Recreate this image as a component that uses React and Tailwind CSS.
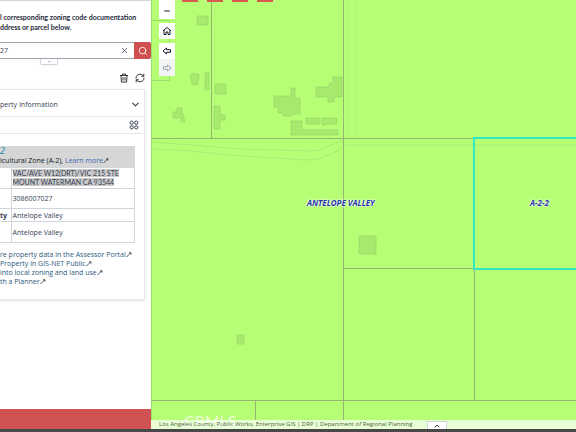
import React from "react";
import { ChevronDown, ChevronUp, Search, X, Minus } from "lucide-react";

const rows = [
	{ label: "", value: "VAC/AVE W12(DRT)/VIC 215 STE MOUNT WATERMAN CA 93544", height: "h-[21px]", marked: true },
	{ label: "", value: "3086007027", height: "h-5" },
	{ label: "ty", value: "Antelope Valley", height: "h-[13px]" },
	{ label: "", value: "Antelope Valley", height: "h-[21px]" },
];

const links = [
	"re property data in the Assessor Portal",
	"Property in GIS-NET Public",
	"into local zoning and land use",
	"th a Planner",
];

// footprints drawn on the map, in map pixels
const buildings = [
	"M46 16h11v9h-11z",
	"M40 74l3 -1 1 1 4 0 0 5 -2 6 -5 -1 -1 -5z",
	"M54 73h4v17h-4z",
	"M64 84h11v10h-11z",
	"M63 106h6v9h5v5h-5v9h-6z",
	"M22 112h4v-4h5v6h1l2 8h-4v-4h-8z",
	"M123 96h17v-8h4v10h5v16h-8v2h-9v-3h-5v-6h-4z",
	"M165 87h13v-4h4v-6h9v20h-8v5h-6v-5h-12z",
	"M140 121h11v9h36v5h-47z",
	"M155 118h14v6h-14z",
	"M171 118h15v6h-11v1h-4z",
	"M208 236h17v18h-17z",
	"M86 335h7v9h-7z",
];

const ExternalMark = () => (
	<svg viewBox="0 0 6 6" className="inline w-[6px] h-[6px] text-gray-700" fill="none" stroke="currentColor" strokeWidth="0.9">
		<path d="M0.5 5L4.500 1M3 0.800h2v1.800" />
	</svg>
);

const MapCanvas = () => (
	<svg className="block w-full h-full" fill="none" aria-hidden="true">
		<rect width="100%" height="100%" fill="#b6ff74" />
		<path d="M0 20.500H18.500V80.500H0M0.500 0V420" stroke="#9adf69" />
		<path d="M0 142L40 145 90 149 160 151 170 150 187 142 193 139 M0 149L40 151 90 156 155 160 168 159 186 151 195 145 H2000" stroke="#a9ec76" />
		<path d="M197.500 0V138M204.500 0V138" stroke="#aef478" />
		<g fill="#a6e96d" stroke="#98d66a" strokeWidth="0.7">
			{buildings.map((d) => <path key={d} d={d} />)}
		</g>
		<path
			d="M60.500 0V138.500M192.500 0V420M0 138.500H323M193 268.500H323M323.500 269V400M0 400.500H2000M104.500 401V420"
			stroke="#96b573"
		/>
		<path d="M2000 138H323V269H2000" stroke="#35e8c4" strokeWidth="2" />
	</svg>
);

const mapButton = "flex items-center justify-center w-4";
const mapLabel = "absolute top-[198px] font-['Noto_Sans',sans-serif] text-[8px] font-bold italic text-[#2438a0] [text-shadow:0_0_2px_white,0_0_2px_white,0_0_1px_white]";

const App = () => {
	return (
		<div className="flex flex-col h-screen overflow-hidden bg-[#484848] font-['Open_Sans',sans-serif] text-[7px] leading-[9px] text-gray-700">
			<div className="flex flex-1 min-h-0">
				{/* Search panel */}
				<aside className="flex flex-col w-[151px] shrink-0 overflow-hidden bg-white border-t border-gray-300">
					<p className="h-[41px] pt-[11px] font-['Lato',sans-serif] font-bold leading-[10px] whitespace-nowrap text-gray-800">
						l corresponding zoning code documentation
						<br />
						ddress or parcel below.
					</p>
					<form className="flex h-[17px] shrink-0" onSubmit={(e) => e.preventDefault()}>
						<div className="flex flex-1 min-w-0 items-center border-y border-gray-400">
							<input aria-label="Address or parcel" defaultValue="27" className="flex-1 min-w-0 outline-none" />
							<button type="button" aria-label="Clear" className="w-[20px] flex justify-center"><X size={9} strokeWidth={2} /></button>
						</div>
						<button aria-label="Search" className="flex items-center justify-center w-[17px] bg-[#d05050] text-white rounded-r-xs"><Search size={10} strokeWidth={2} /></button>
					</form>
					<button aria-label="Collapse" className="flex items-center justify-center w-[18px] h-[6px] ml-10 shrink-0 border border-t-0 border-gray-300 rounded-b-xs shadow-xs"><ChevronUp size={5} /></button>
					<div className="flex justify-end gap-[6px] h-6 pr-[6px] pt-[8px] shrink-0">
						<button aria-label="Delete" className="h-[10px]">
							<svg viewBox="0 0 10 10" className="w-[10px] h-[10px]" fill="none" stroke="#222" strokeWidth="0.9">
								<path d="M1 2.500h8M3.500 2.300V1h3v1.300M2 2.500l.4 6.600h5.200L8 2.500M4 4.200v3.300M6 4.200v3.300" />
							</svg>
						</button>
						<button aria-label="Refresh" className="h-[10px]">
							<svg viewBox="0 0 10 10" className="w-[10px] h-[10px]" fill="none" stroke="#222" strokeWidth="0.9">
								<path d="M1 5.500C.8 3 2.500 1.200 5 1.200c1.500 0 2.700.8 3.500 2M8.800.8v2.500H6.400M9 4.600c.2 2.400-1.500 4.200-4 4.200-1.500 0-2.700-.8-3.500-2M1.200 9.300V6.700h2.400" />
							</svg>
						</button>
					</div>
					<section className="h-[211px] shrink-0 mr-[6px] border-t border-r border-b border-gray-200 rounded-br-xs shadow-sm">
						<button className="flex w-full items-center justify-between h-[27px] pt-[2px] pr-[3px] border-b border-gray-200">
							<span>perty Information</span>
							<ChevronDown size={11} strokeWidth={2.5} />
						</button>
						<div className="flex justify-end items-center h-[17px] pr-[5px] border-b border-gray-200">
							<button aria-label="Layers">
								<svg viewBox="0 0 10 10" className="w-[10px] h-[10px]" fill="none" stroke="currentColor" strokeWidth="1">
									<circle cx="2.700" cy="2.700" r="1.600" /><circle cx="7.300" cy="2.700" r="1.600" />
									<circle cx="2.700" cy="7.300" r="1.600" /><circle cx="7.300" cy="7.300" r="1.600" />
								</svg>
							</button>
						</div>
						<div className="mt-3 mr-[9px] h-[21px] bg-[#d6d6d6] whitespace-nowrap text-gray-900">
							<div className="italic text-[9px] leading-[10px] text-[#168ba8]">2</div>
							<div>icultural Zone (A-2), <a href="#zone" className="text-[#3b66b0]">Learn more<ExternalMark /></a></div>
						</div>
						<div className="mr-[9px]">
							<table className="w-full border-collapse">
								<tbody>
									{rows.map((row, index) => (
										<tr key={index} className={row.height}>
											<th className="w-[11px] p-0 text-left border border-l-0 border-gray-300">{row.label}</th>
											<td className="p-0 pl-px border border-gray-300">
												<span className={row.marked ? "bg-[#c9c9c9] font-['Lato',sans-serif]" : ""}>{row.value}</span>
											</td>
										</tr>
									))}
								</tbody>
							</table>
						</div>
						<ul className="mt-[7px] text-[#2c5a7c] whitespace-nowrap">
							{links.map((link) => (
								<li key={link}><a href="#more">{link}<ExternalMark /></a></li>
							))}
						</ul>
					</section>
					<div className="mt-auto h-5 shrink-0 bg-[#cf5353]"></div>
				</aside>

				{/* Map */}
				<main className="relative flex-1 min-w-0 overflow-hidden">
					<MapCanvas />
					<div className="absolute left-2 top-0 flex flex-col text-gray-900">
						<button aria-label="Zoom out" className={mapButton + " h-[19px] pt-[3px] bg-white"}><Minus size={8} strokeWidth={3} /></button>
						<button aria-label="Home" className={mapButton + " h-4 mt-1 bg-white"}>
							<svg viewBox="0 0 10 10" className="w-[10px] h-[10px]" fill="none" stroke="currentColor">
								<path d="M1 4.800L5 1.500l4 3.300M2 4v4.500h2V6h2v2.500h2V4" />
							</svg>
						</button>
						<button aria-label="Previous extent" className={mapButton + " h-4 mt-1 bg-white"}>
							<svg viewBox="0 0 10 10" className="w-[10px] h-[10px]" fill="none" stroke="currentColor">
								<path d="M1 5l3.500-3v1.700h4v2.600h-4V8z" />
							</svg>
						</button>
						<button aria-label="Next extent" disabled className={mapButton + " h-[17px] bg-gray-100 text-gray-400"}>
							<svg viewBox="0 0 10 10" className="w-[10px] h-[10px]" fill="none" stroke="currentColor">
								<path d="M9 5L5.500 2v1.700h-4v2.600h4V8z" />
							</svg>
						</button>
					</div>
					<div className="absolute left-[31px] top-0 flex gap-[9px]">
						<i className="w-4 h-[2px] bg-[#d65a4e]"></i>
						<i className="w-4 h-[2px] bg-[#d65a4e]"></i>
						<i className="w-4 h-[2px] bg-[#d65a4e]"></i>
						<i className="w-4 h-[2px] bg-[#d65a4e]"></i>
					</div>
					<span className={mapLabel + " left-[156px]"}>ANTELOPE VALLEY</span>
					<span className={mapLabel + " left-[379px]"}>A-2-2</span>
					<span className="absolute left-[33px] bottom-0 font-['Lato',sans-serif] text-[16px] leading-4 text-white/70">CRMLS</span>
					<footer className="absolute inset-x-0 bottom-0 h-[9px] pl-2 bg-white/70 text-[6px] text-[#4d5f3c] whitespace-nowrap">
						Los Angeles County, Public Works, Enterprise GIS | DRP | Department of Regional Planning
					</footer>
					<button aria-label="Open table" className="absolute left-[276px] bottom-0 flex items-center justify-center w-5 h-[8px] bg-white border border-b-0 border-gray-300"><ChevronUp size={8} strokeWidth={3} /></button>
				</main>
			</div>
			<div className="h-[3px] shrink-0 bg-[#484848]"></div>
		</div>
	);
};

export default App;
